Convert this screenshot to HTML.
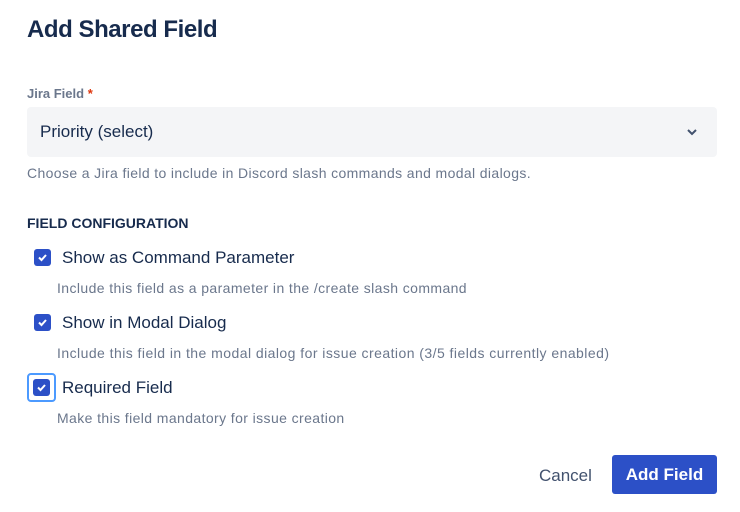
<!DOCTYPE html>
<html><head><style>
*{margin:0;padding:0;box-sizing:border-box}
body{width:740px;height:512px;background:#fff;font-family:"Liberation Sans",sans-serif;color:#172b4d;position:relative;overflow:hidden}
.a{position:absolute;white-space:nowrap}
.cb{position:absolute;width:17px;height:17px;background:#2c50c7;border-radius:3px}
.cb svg{position:absolute;left:3px;top:3px}
.lbl{font-size:17px;color:#172b4d}
.desc{font-size:14px;color:#6b778c;letter-spacing:0.4px}
</style></head><body>
<div class="a" style="left:27px;top:16px;font-size:24px;font-weight:bold;letter-spacing:-0.45px">Add Shared Field</div>
<div class="a" style="left:27px;top:86px;font-size:13px;font-weight:bold;color:#6b778c">Jira Field <span style="color:#de350b">*</span></div>
<div class="a" style="left:27px;top:107px;width:690px;height:50px;background:#f4f5f7;border-radius:4px"></div>
<div class="a" style="left:40px;top:122px;font-size:17px">Priority (select)</div>
<svg class="a" style="left:686px;top:127px" width="12" height="10" viewBox="0 0 12 10"><path d="M2 3l4 4 4-4" fill="none" stroke="#42526e" stroke-width="2"/></svg>
<div class="a desc" style="left:27px;top:165px;letter-spacing:0.37px">Choose a Jira field to include in Discord slash commands and modal dialogs.</div>
<div class="a" style="left:27px;top:215px;font-size:14px;font-weight:bold;color:#172b4d">FIELD CONFIGURATION</div>

<div class="cb" style="left:34px;top:249px"><svg width="11" height="11" viewBox="0 0 11 11"><path d="M2 5.5l2.5 2.5 4.5-5" fill="none" stroke="#fff" stroke-width="2"/></svg></div>
<div class="a lbl" style="left:62px;top:248px">Show as Command Parameter</div>
<div class="a desc" style="left:57px;top:280px">Include this field as a parameter in the /create slash command</div>

<div class="cb" style="left:34px;top:314px"><svg width="11" height="11" viewBox="0 0 11 11"><path d="M2 5.5l2.5 2.5 4.5-5" fill="none" stroke="#fff" stroke-width="2"/></svg></div>
<div class="a lbl" style="left:62px;top:313px">Show in Modal Dialog</div>
<div class="a desc" style="left:57px;top:345px;letter-spacing:0.45px">Include this field in the modal dialog for issue creation (3/5 fields currently enabled)</div>

<div class="a" style="left:27px;top:373px;width:29px;height:29px;border:2px solid #4c9aff;border-radius:4px"></div>
<div class="cb" style="left:33px;top:379px"><svg width="11" height="11" viewBox="0 0 11 11"><path d="M2 5.5l2.5 2.5 4.5-5" fill="none" stroke="#fff" stroke-width="2"/></svg></div>
<div class="a lbl" style="left:62px;top:378px">Required Field</div>
<div class="a desc" style="left:57px;top:410px">Make this field mandatory for issue creation</div>

<div class="a" style="left:539px;top:466px;font-size:17px;color:#42526e">Cancel</div>
<div class="a" style="left:612px;top:455px;width:105px;height:39px;background:#2c50c7;border-radius:3px;color:#fff;font-size:17px;font-weight:bold;text-align:center;line-height:39px">Add Field</div>
</body></html>
